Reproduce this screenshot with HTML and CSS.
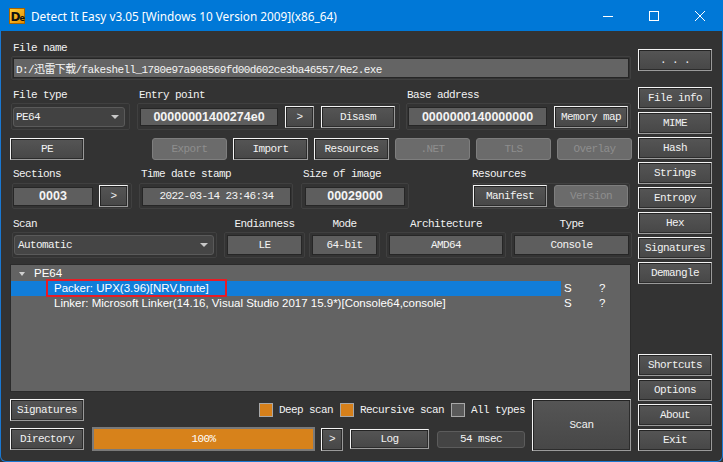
FILE: index.html
```html
<!DOCTYPE html>
<html>
<head>
<meta charset="utf-8">
<link rel="stylesheet" href="styles.css">
</head>
<body>
<div class="window">
  <div class="titlebar">
    <svg class="logo" width="16" height="16" viewBox="0 0 16 16">
      <defs>
        <linearGradient id="lg" x1="0" y1="0" x2="1" y2="1">
          <stop offset="0" stop-color="#ffd23a"/>
          <stop offset="1" stop-color="#e58a00"/>
        </linearGradient>
      </defs>
      <rect x="0.5" y="0.5" width="15" height="15" fill="url(#lg)" stroke="#a86400"/>
      <text x="1.5" y="13" font-family="DejaVu Sans" font-weight="bold" font-size="12" fill="#111">D<tspan font-size="8" dx="-0.5">e</tspan></text>
    </svg>
    <span class="title">Detect It Easy v3.05 [Windows 10 Version 2009](x86_64)</span>
    <div class="winctl">
      <span class="wc"><svg width="10" height="10" viewBox="0 0 10 10"><line x1="0" y1="5.5" x2="10" y2="5.5" stroke="#fff" stroke-width="1"/></svg></span>
      <span class="wc"><svg width="10" height="10" viewBox="0 0 10 10"><rect x="0.5" y="0.5" width="9" height="9" fill="none" stroke="#fff" stroke-width="1"/></svg></span>
      <span class="wc"><svg width="10" height="10" viewBox="0 0 10 10"><path d="M0 0 L10 10 M10 0 L0 10" stroke="#fff" stroke-width="1"/></svg></span>
    </div>
  </div>
  <div class="content">
    <div class="main">
      <div class="lbl pl3">File name</div>
      <div class="frame fn-frame"><div class="field left fn">D:/迅雷下载/fakeshell_1780e97a908569fd00d602ce3ba46557/Re2.exe</div></div>

      <div class="row r1">
        <div class="g g-ft">
          <div class="lbl">File type</div>
          <div class="frame"><div class="combo c-ft">PE64<i class="arrow"></i></div></div>
        </div>
        <div class="g g-ep">
          <div class="lbl">Entry point</div>
          <div class="frame">
            <div class="field bold f-ep">00000001400274e0</div>
            <div class="btn arr">&gt;</div>
            <div class="btn">Disasm</div>
          </div>
        </div>
        <div class="g g-ba">
          <div class="lbl">Base address</div>
          <div class="frame">
            <div class="field bold f-ba">0000000140000000</div>
            <div class="btn">Memory map</div>
          </div>
        </div>
      </div>

      <div class="row r2">
        <div class="btn b74">PE</div>
        <div class="btn dis b75 export">Export</div>
        <div class="btn b75">Import</div>
        <div class="btn b75">Resources</div>
        <div class="btn dis b75">.NET</div>
        <div class="btn dis b75">TLS</div>
        <div class="btn dis b75">Overlay</div>
      </div>

      <div class="row r3">
        <div class="g g-sec">
          <div class="lbl">Sections</div>
          <div class="frame">
            <div class="field bold f-sec">0003</div>
            <div class="btn arr">&gt;</div>
          </div>
        </div>
        <div class="g g-tds">
          <div class="lbl">Time date stamp</div>
          <div class="frame"><div class="field f-tds">2022-03-14 23:46:34</div></div>
        </div>
        <div class="g g-soi">
          <div class="lbl">Size of image</div>
          <div class="frame"><div class="field bold f-soi">00029000</div></div>
        </div>
        <div class="g g-res">
          <div class="lbl">Resources</div>
          <div class="frame">
            <div class="btn b74">Manifest</div>
            <div class="btn dis b74">Version</div>
          </div>
        </div>
      </div>

      <div class="row r4">
        <div class="g g-scan">
          <div class="lbl">Scan</div>
          <div class="frame"><div class="combo c-scan">Automatic<i class="arrow"></i></div></div>
        </div>
        <div class="g g-le center">
          <div class="lbl">Endianness</div>
          <div class="frame"><div class="field f-le">LE</div></div>
        </div>
        <div class="g g-mode center">
          <div class="lbl">Mode</div>
          <div class="frame"><div class="field f-mode">64-bit</div></div>
        </div>
        <div class="g g-arch center">
          <div class="lbl">Architecture</div>
          <div class="frame"><div class="field f-arch">AMD64</div></div>
        </div>
        <div class="g g-type center">
          <div class="lbl">Type</div>
          <div class="frame"><div class="field f-type">Console</div></div>
        </div>
      </div>

      <div class="tree">
        <div class="trow">
          <div class="c1 lvl0"><i class="tri"></i>PE64</div>
          <div class="c2"></div><div class="c3"></div>
        </div>
        <div class="trow">
          <div class="c1 lvl1 sel">Packer: UPX(3.96)[NRV,brute]<span class="mark"></span></div>
          <div class="c2">S</div><div class="c3">?</div>
        </div>
        <div class="trow">
          <div class="c1 lvl1">Linker: Microsoft Linker(14.16, Visual Studio 2017 15.9*)[Console64,console]</div>
          <div class="c2">S</div><div class="c3">?</div>
        </div>
      </div>

      <div class="bottom">
        <div class="bl">
          <div class="b1">
            <div class="btn b74">Signatures</div>
            <div class="chk first"><span class="box on"></span>Deep scan</div>
            <div class="chk"><span class="box on"></span>Recursive scan</div>
            <div class="chk"><span class="box"></span>All types</div>
          </div>
          <div class="b2">
            <div class="btn b74">Directory</div>
            <div class="progress">100%</div>
            <div class="btn arr2">&gt;</div>
            <div class="btn log">Log</div>
            <div class="msec">54 msec</div>
          </div>
        </div>
        <div class="btn scanbtn">Scan</div>
      </div>
    </div>

    <div class="side">
      <div class="btn">. . .</div>
      <div class="btn first">File info</div>
      <div class="btn">MIME</div>
      <div class="btn">Hash</div>
      <div class="btn">Strings</div>
      <div class="btn">Entropy</div>
      <div class="btn">Hex</div>
      <div class="btn">Signatures</div>
      <div class="btn">Demangle</div>
      <div class="btn gap">Shortcuts</div>
      <div class="btn">Options</div>
      <div class="btn">About</div>
      <div class="btn">Exit</div>
    </div>
  </div>
</div>
</body>
</html>
```

FILE: styles.css
```css
* { box-sizing: border-box; }
html, body { margin: 0; padding: 0; }
body {
  width: 723px;
  height: 462px;
  overflow: hidden;
  background: #333333;
  font-family: "Liberation Mono", "Noto Sans CJK SC", monospace;
  font-size: 11px;
  letter-spacing: -0.6px;
  color: #f2f2f2;
}
.window {
  width: 723px;
  height: 462px;
  display: flex;
  flex-direction: column;
  background: #333333;
}
.titlebar {
  height: 31px;
  flex: none;
  background: #0078d7;
  display: flex;
  align-items: center;
  padding-left: 9px;
}
.logo { flex: none; margin-right: 6px; }
.title {
  font-family: "Noto Sans", sans-serif;
  font-size: 11.8px;
  letter-spacing: 0;
  color: #ffffff;
}
.winctl { margin-left: auto; display: flex; }
.wc {
  width: 46px;
  height: 31px;
  display: flex;
  align-items: center;
  justify-content: center;
}
.content {
  flex: 1;
  display: flex;
  gap: 6px;
  border: 1px solid #1a78d2;
  border-top: 0;
  border-radius: 0 0 6px 6px;
  padding: 0 10px 10px 9px;
}
.main {
  width: 622px;
  display: flex;
  flex-direction: column;
  padding-top: 11px;
}
.side {
  width: 74px;
  display: flex;
  flex-direction: column;
  padding-top: 18px;
  gap: 3px;
}
.side .first { margin-top: 13px; }
.side .gap { margin-top: 67px; }

.lbl {
  height: 12px;
  line-height: 12px;
  white-space: nowrap;
}
.pl3 { padding-left: 3px; }

.frame {
  border: 1px solid #404040;
  border-radius: 2px;
  display: flex;
  align-items: center;
}
.field {
  background: #5e5e5e;
  border: 1px solid #262626;
  display: flex;
  align-items: center;
  justify-content: center;
  white-space: nowrap;
  color: #f4f4f4;
}
.field.left { justify-content: flex-start; padding-left: 2px; }
.field.bold {
  font-family: "Liberation Sans", sans-serif;
  font-weight: bold;
  font-size: 12.5px;
  letter-spacing: 0;
}

.btn {
  height: 22px;
  flex: none;
  border: 1px solid;
  border-color: #f4f4f4 #9a9a9a #9a9a9a #f4f4f4;
  background: linear-gradient(#555555, #474747);
  box-shadow: inset 1px 1px 0 #242424, inset -1px -1px 0 #2c2c2c;
  display: flex;
  align-items: center;
  justify-content: center;
  color: #f2f2f2;
  white-space: nowrap;
}
.btn.dis {
  border: 1px solid #7e7e7e;
  border-radius: 3px;
  background: #6b6b6b;
  box-shadow: none;
  color: #8e8e8e;
}
.b74 { width: 74px; }
.b75 { width: 75px; }

.combo {
  height: 20px;
  background: #424242;
  border: 1px solid #5a5a5a;
  border-radius: 3px;
  display: flex;
  align-items: center;
  padding-left: 2px;
  white-space: nowrap;
}
.combo .arrow {
  margin-left: auto;
  margin-right: 5px;
  width: 0;
  height: 0;
  border-left: 4px solid transparent;
  border-right: 4px solid transparent;
  border-top: 4px solid #c8c8c8;
}

.row { display: flex; }
.g { display: flex; flex-direction: column; }
.g.center .lbl { text-align: center; }

/* file name */
.fn-frame {
  margin-top: 2px;
  margin-left: 1px;
  width: 620px;
  height: 24px;
  padding: 1px;
}
.fn {
  width: 616px;
  height: 20px;
  background: #646464;
  padding-left: 2px;
}

/* row 1 */
.r1 { margin-top: 9px; }
.r1 .frame { margin-top: 2px; height: 27px; }
.g-ft { margin-left: 1px; }
.g-ft .lbl { padding-left: 2px; }
.g-ft .frame { width: 119px; padding-left: 1px; }
.c-ft { width: 112px; padding-left: 2px; }
.g-ep { margin-left: 7px; }
.g-ep .lbl { padding-left: 2px; }
.g-ep .frame { width: 263px; padding-left: 2px; gap: 7px; }
.f-ep { width: 138px; height: 18px; }
.arr { width: 29px; }
.g-ep .btn { height: 22px; }
.g-ep .btn:last-child { width: 74px; }
.g-ba { margin-left: 6px; }
.g-ba .lbl { padding-left: 1px; }
.g-ba .frame { width: 225px; padding-left: 1px; gap: 7px; }
.f-ba { width: 139px; height: 19px; }
.g-ba .btn { width: 74px; }

/* row 2 */
.r2 { margin-top: 8px; gap: 6px; }
.r2 .export { margin-left: 62px; }

/* row 3 */
.r3 { margin-top: 8px; }
.r3 .frame { margin-top: 3px; height: 26px; }
.g-sec { margin-left: 2px; }
.g-sec .lbl { padding-left: 1px; }
.g-sec .frame { width: 120px; gap: 6px; }
.f-sec { width: 80px; height: 19px; }
.g-tds { margin-left: 7px; }
.g-tds .lbl { padding-left: 2px; }
.g-tds .frame { width: 154px; padding-left: 2px; }
.f-tds { width: 149px; height: 19px; }
.g-soi { margin-left: 8px; }
.g-soi .lbl { padding-left: 2px; }
.g-soi .frame { width: 108px; padding-left: 3px; }
.f-soi { width: 100px; height: 19px; }
.g-res { margin-left: 63px; }
.g-res .frame { width: 158px; gap: 7px; }

/* row 4 */
.r4 { margin-top: 9px; }
.r4 .frame { margin-top: 2px; height: 26px; padding-left: 2px; }
.g-scan { margin-left: 2px; }
.g-scan .lbl { padding-left: 1px; }
.g-scan .frame { width: 205px; padding-left: 1px; }
.c-scan { width: 200px; padding-left: 3px; background: #454545; }
.g-le { margin-left: 7px; }
.g-le .frame { width: 81px; }
.f-le { width: 75px; height: 20px; }
.g-mode { margin-left: 4px; }
.g-mode .frame { width: 71px; }
.f-mode { width: 65px; height: 20px; }
.g-arch { margin-left: 6px; }
.g-arch .frame { width: 120px; }
.f-arch { width: 114px; height: 20px; }
.g-type { margin-left: 5px; }
.g-type .frame { width: 121px; }
.f-type { width: 115px; height: 20px; }

/* tree */
.tree {
  margin-top: 6px;
  width: 621px;
  height: 128px;
  background: #636363;
  border: 1px solid #2b2b2b;
  padding-top: 1px;
  font-family: "Liberation Sans", sans-serif;
  font-size: 11.5px;
  letter-spacing: 0;
  color: #ffffff;
}
.trow { display: flex; height: 15px; line-height: 15px; }
.c1 { width: 550px; position: relative; white-space: nowrap; display: flex; align-items: center; }
.c2 { width: 38px; padding-left: 3px; }
.c3 { flex: 1; }
.lvl0 { padding-left: 8px; }
.lvl1 { padding-left: 43px; }
.tri {
  width: 0;
  height: 0;
  border-left: 3.5px solid transparent;
  border-right: 3.5px solid transparent;
  border-top: 4px solid #d0d0d0;
  margin-right: 9px;
}
.sel { background: #117dd9; }
.mark {
  position: absolute;
  left: 35px;
  top: -2px;
  width: 181px;
  height: 18px;
  border: 2px solid #e81b25;
}

/* bottom */
.bottom { margin-top: 7px; display: flex; gap: 7px; }
.bl { width: 515px; display: flex; flex-direction: column; gap: 6px; }
.b1 { display: flex; align-items: center; height: 22px; }
.chk { display: flex; align-items: center; gap: 6px; margin-left: 7px; white-space: nowrap; }
.chk.first { margin-left: 175px; }
.box {
  width: 14px;
  height: 14px;
  border: 1px solid #a8a8a8;
  background: #5a5a5a;
}
.box.on { background: #d6801b; }
.b2 { display: flex; align-items: center; height: 24px; }
.progress {
  margin-left: 8px;
  width: 223px;
  height: 24px;
  border: 2px solid #7a7a7a;
  background: #d7821b;
  display: flex;
  align-items: center;
  justify-content: center;
  color: #ffffff;
}
.arr2 { margin-left: 6px; width: 22px; height: 23px; }
.log { margin-left: 7px; width: 79px; height: 20px; }
.msec {
  margin-left: 8px;
  width: 88px;
  height: 17px;
  background: #444444;
  border: 1px solid #5c5c5c;
  border-radius: 3px;
  display: flex;
  align-items: center;
  justify-content: center;
}
.scanbtn { width: 99px; height: 52px; }
```
